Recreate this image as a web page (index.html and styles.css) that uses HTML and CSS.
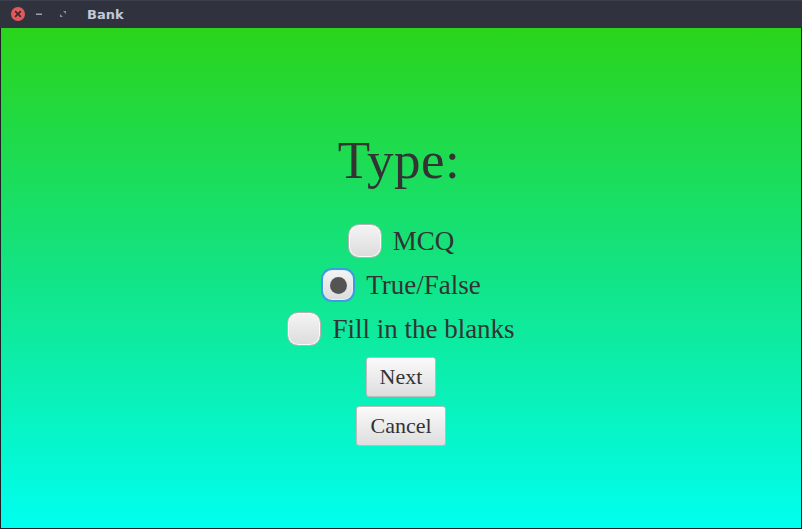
FILE: index.html
```html
<!DOCTYPE html>
<html>
<head>
<meta charset="utf-8">
<link rel="stylesheet" href="styles.css">
</head>
<body>
<div class="window">
  <div class="titlebar">
    <div class="controls">
      <span class="btn-close">
        <svg width="14" height="14" viewBox="0 0 14 14"><circle cx="7" cy="7" r="7" fill="#e05a5c"/><path d="M4.6 4.6 L9.4 9.4 M9.4 4.6 L4.6 9.4" stroke="#3a2a2e" stroke-width="1.6" stroke-linecap="round"/></svg>
      </span>
      <span class="btn-min">
        <svg width="8" height="8" viewBox="0 0 8 8"><rect x="1" y="3.5" width="6" height="1.5" fill="#9aa0ad"/></svg>
      </span>
      <span class="btn-max">
        <svg width="8" height="8" viewBox="0 0 8 8"><path d="M4 1 H7 V4 Z M1 4 V7 H4 Z" fill="#8a909c"/></svg>
      </span>
    </div>
    <span class="title">Bank</span>
  </div>
  <div class="content">
    <h1 class="heading">Type:</h1>
    <div class="options">
      <label class="option"><span class="radio"></span><span class="label">MCQ</span></label>
      <label class="option"><span class="radio checked"><span class="dot"></span></span><span class="label">True/False</span></label>
      <label class="option"><span class="radio"></span><span class="label">Fill in the blanks</span></label>
    </div>
    <div class="actions">
      <button class="button">Next</button>
      <button class="button">Cancel</button>
    </div>
  </div>
</div>
</body>
</html>
```
FILE: styles.css
```css
html, body {
  margin: 0;
  padding: 0;
  width: 802px;
  height: 529px;
  overflow: hidden;
  background: #1e2026;
}
.window {
  width: 802px;
  height: 529px;
  display: flex;
  flex-direction: column;
  box-sizing: border-box;
}
.titlebar {
  height: 28px;
  flex: none;
  background: #30333e;
  display: flex;
  align-items: center;
  box-shadow: inset 0 1px 0 #3c404c;
}
.controls {
  display: flex;
  align-items: center;
  padding-left: 11px;
}
.controls span { display: flex; }
.btn-min { margin-left: 10px; }
.btn-max { margin-left: 16px; }
.title {
  margin-left: 20px;
  font-family: "DejaVu Sans", sans-serif;
  font-weight: bold;
  font-size: 13px;
  color: #c3c8d6;
  padding-top: 1px;
}
.content {
  flex: 1;
  margin: 0 1px 1px 1px;
  background: linear-gradient(to bottom, #2ad41a 0%, #14e27c 45%, #00fff0 100%);
  display: flex;
  flex-direction: column;
  align-items: center;
  font-family: "Liberation Serif", "DejaVu Serif", serif;
  color: #333333;
}
.heading {
  margin: 100px 0 0 0;
  font-weight: normal;
  font-size: 53px;
  line-height: 64px;
  letter-spacing: 0.5px;
  padding-right: 4px;
}
.options {
  margin-top: 32px;
  display: flex;
  flex-direction: column;
  align-items: center;
  gap: 10px;
}
.option {
  display: flex;
  align-items: center;
  gap: 11px;
  height: 34px;
}
.radio {
  width: 34px;
  height: 34px;
  box-sizing: border-box;
  border: 1px solid #b4b4b4;
  border-radius: 11px;
  background: linear-gradient(to bottom, #f4f4f4, #dcdcdc);
  display: flex;
  align-items: center;
  justify-content: center;
  box-shadow: inset 0 0 0 1px #fafafa;
}
.radio.checked {
  border: 2px solid #3d9be0;
  box-shadow: inset 0 0 0 1px #e6eef6;
}
.dot {
  width: 17px;
  height: 17px;
  border-radius: 50%;
  background: #545454;
}
.label {
  font-size: 27px;
  line-height: 34px;
}
.actions {
  margin-top: 11px;
  display: flex;
  flex-direction: column;
  align-items: center;
  gap: 9px;
}
.button {
  height: 40px;
  padding: 0 13px;
  font-family: "Liberation Serif", "DejaVu Serif", serif;
  font-size: 22px;
  color: #333333;
  border: 1px solid #bcbcbc;
  border-radius: 3px;
  background: linear-gradient(to bottom, #fafafa, #dedede);
  box-shadow: inset 0 1px 0 #ffffff;
}
```
